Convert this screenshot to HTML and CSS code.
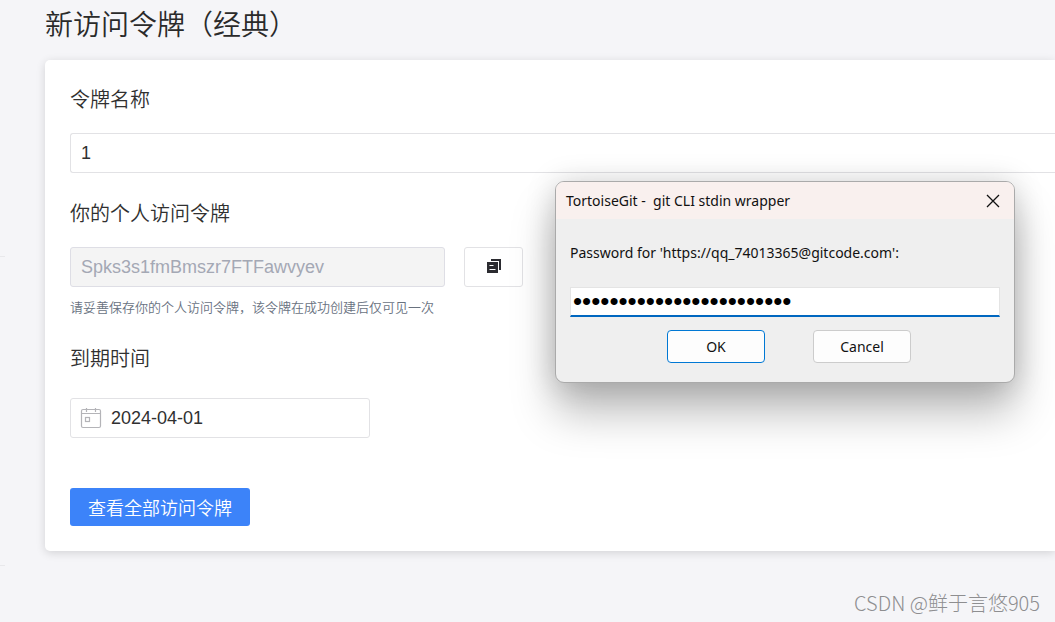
FILE: index.html
```html
<!DOCTYPE html>
<html lang="zh-CN">
<head>
<meta charset="utf-8">
<title>新访问令牌（经典）</title>
<link rel="stylesheet" href="styles.css">
</head>
<body>
<div class="layout">
  <aside class="rail"><div class="rail-top"></div><div class="rail-group"></div></aside>
  <main class="page">
    <h1 class="page-title">新访问令牌（经典）</h1>
    <form class="card">
      <label class="label" for="name">令牌名称</label>
      <input class="field field-wide" id="name" type="text" value="1">
      <label class="label" for="token">你的个人访问令牌</label>
      <div class="token-row">
        <input class="field field-token" id="token" type="text" value="Spks3s1fmBmszr7FTFawvyev" disabled>
        <button class="copy" type="button" aria-label="复制">
          <svg width="16" height="16" viewBox="0 0 16 16"><path fill="#2b2b30" d="M5 0h10v11h-2V2H5z"/><path fill="#2b2b30" d="M1 3h11v11H1z"/><path stroke="#fff" d="M3.500 6.500h4M3.500 10.500h6"/></svg>
        </button>
      </div>
      <p class="hint">请妥善保存你的个人访问令牌，该令牌在成功创建后仅可见一次</p>
      <label class="label" for="date">到期时间</label>
      <div class="date">
        <svg width="22" height="22" viewBox="0 0 22 22" fill="none" stroke="#b4b4b8" stroke-width="1.200"><rect x="1.500" y="2.500" width="19" height="18" rx="1.500"/><path d="M1.500 6.500h19M6.500 1v4M15.500 1v4"/><rect x="5.500" y="10.500" width="4" height="4"/></svg>
        <input class="date-input" id="date" type="text" value="2024-04-01">
      </div>
      <button class="primary" type="button">查看全部访问令牌</button>
    </form>
    <footer class="watermark">CSDN @鲜于言悠905</footer>
  </main>
</div>
<section class="dialog" role="dialog" aria-labelledby="dialog-title">
  <header class="dialog-bar">
    <h2 class="dialog-title" id="dialog-title">TortoiseGit -&nbsp; git CLI stdin wrapper</h2>
    <button class="close" type="button" aria-label="Close"><svg width="14" height="14" viewBox="0 0 14 14"><path d="M1 1l12 12M13 1L1 13" stroke="#111" stroke-width="1.300"/></svg></button>
  </header>
  <form class="dialog-body">
    <label class="dialog-label" for="password">Password for 'https://qq_74013365@gitcode.com':</label>
    <input class="password" id="password" type="password" value="123456789012345678901234">
    <div class="actions">
      <button class="action action-default" type="button">OK</button>
      <button class="action" type="button">Cancel</button>
    </div>
  </form>
</section>
</body>
</html>
```
FILE: styles.css
```css
* { box-sizing: border-box; }
body {
  margin: 0;
  background: #f5f5f8;
  color: #303030;
  font-family: "Liberation Sans", "Noto Sans CJK SC", sans-serif;
  overflow-x: hidden;
}
.layout { display: flex; gap: 40px; min-height: 100vh; }
.rail { width: 5px; flex: none; }
.rail-top { height: 257px; border-bottom: 1px solid #e8e8eb; }
.rail-group { height: 309px; border-bottom: 1px solid #e8e8eb; }
.page { flex: 1; min-width: 0; }
.page-title {
  margin: 0 0 14px;
  font: 350 28px/46px "Noto Sans CJK SC", sans-serif;
  color: #2a2a2a;
}
.card {
  display: flex;
  flex-direction: column;
  align-items: flex-start;
  padding: 25px 0 25px 25px;
  background: #fff;
  border-radius: 5px 0 0 5px;
  box-shadow: 0 2px 10px rgba(0, 0, 0, 0.14);
}
.label { font-size: 20px; font-weight: 350; line-height: 30px; margin-bottom: 18px; }
.field {
  height: 40px;
  padding: 0 10px;
  border: 1px solid #e2e2e5;
  border-radius: 3px;
  background: #fff;
  color: #303030;
  font: 18px "Liberation Sans", sans-serif;
}
.field-wide { width: 100%; border-right: 0; border-radius: 3px 0 0 3px; margin-bottom: 26px; }
.token-row { display: flex; gap: 19px; }
.field-token { width: 375px; background: #f4f4f4; border-color: #dedee5; color: #a4a8b4; }
.copy {
  display: grid;
  place-items: center;
  width: 59px;
  height: 40px;
  padding: 0;
  border: 1px solid #e2e2e5;
  border-radius: 3px;
  background: #fff;
}
.hint { margin: 11px 0 26px; font-size: 13px; font-weight: 350; line-height: 20px; color: #69727f; }
.date {
  display: flex;
  align-items: center;
  gap: 9px;
  width: 300px;
  height: 40px;
  margin: 6px 0 50px;
  padding: 0 9px;
  border: 1px solid #e2e2e5;
  border-radius: 3px;
}
.date-input { flex: 1; min-width: 0; padding: 0; border: 0; background: none; color: #303030; font: 18px "Liberation Sans", sans-serif; }
.primary {
  width: 180px;
  height: 38px;
  padding: 0;
  border: 0;
  border-radius: 3px;
  background: #3c83f9;
  color: #fff;
  font: 350 18px "Noto Sans CJK SC", sans-serif;
}
.watermark {
  padding: 37px 15px 0 0;
  text-align: right;
  font: 300 20px/30px "Noto Sans CJK SC", sans-serif;
  color: #8e8e90;
}
.dialog {
  position: absolute;
  top: 181px;
  left: 555px;
  width: 460px;
  overflow: hidden;
  border: 1px solid #aaa;
  border-radius: 9px;
  background: #efefef;
  color: #111;
  font-family: "Noto Sans", sans-serif;
  box-shadow: 0 30px 44px rgba(0, 0, 0, 0.26), 0 2px 30px rgba(0, 0, 0, 0.18);
}
.dialog-bar { display: flex; align-items: center; justify-content: space-between; height: 37px; padding: 0 14px 0 10px; background: #f9f0ee; }
.dialog-title { margin: 0; font-size: 14px; font-weight: 400; }
.close { display: grid; place-items: center; padding: 0; border: 0; background: none; }
.dialog-body { display: flex; flex-direction: column; padding: 24px 14px 19px; }
.dialog-label { font-size: 14px; line-height: 20px; }
.password {
  height: 30px;
  margin: 24px 0 13px;
  padding: 0 2px;
  border: 1px solid #e4e4e4;
  border-bottom: 2px solid #0067c0;
  background: #fff;
  color: #000;
  font: 26px/26px "Liberation Sans", sans-serif;
}
.actions { display: flex; justify-content: center; gap: 48px; padding-left: 8px; }
.action { width: 98px; height: 33px; border: 1px solid #ccc; border-radius: 4px; background: #fdfdfd; color: #111; font: 14px "Noto Sans", sans-serif; }
.action-default { border-color: #0078d4; }
```
